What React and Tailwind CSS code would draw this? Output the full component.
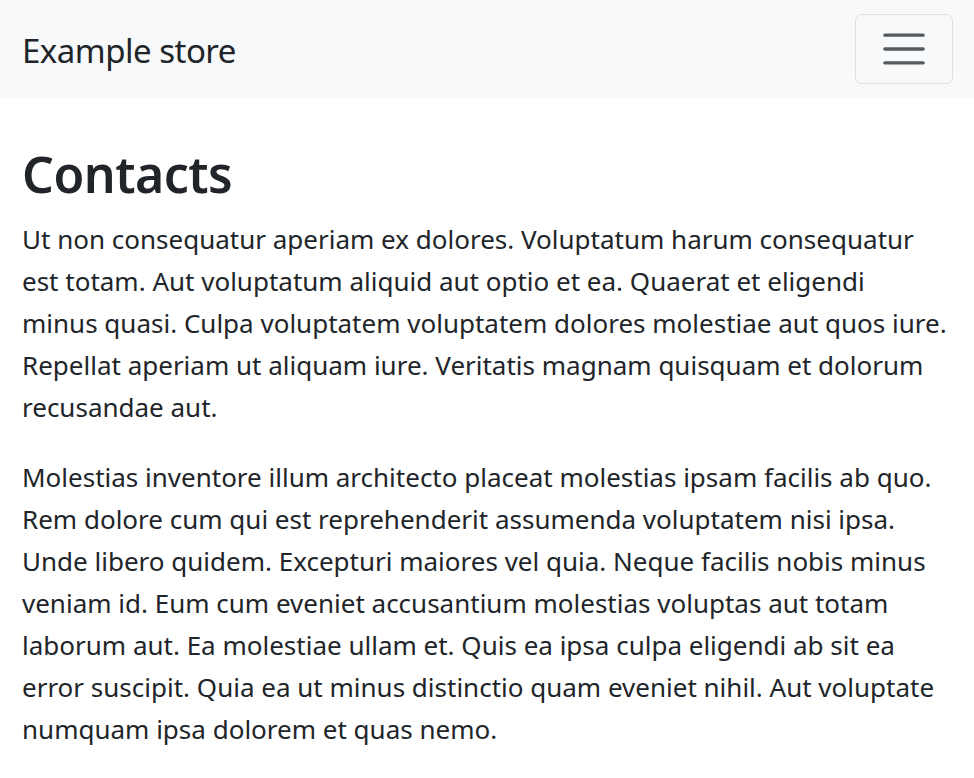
import React from 'react';

const para1 = [
    'Ut non consequatur aperiam ex dolores. Voluptatum harum consequatur',
    'est totam. Aut voluptatum aliquid aut optio et ea. Quaerat et eligendi',
    'minus quasi. Culpa voluptatem voluptatem dolores molestiae aut quos iure.',
    'Repellat aperiam ut aliquam iure. Veritatis magnam quisquam et dolorum',
    'recusandae aut.',
];

const para2 = [
    'Molestias inventore illum architecto placeat molestias ipsam facilis ab quo.',
    'Rem dolore cum qui est reprehenderit assumenda voluptatem nisi ipsa.',
    'Unde libero quidem. Excepturi maiores vel quia. Neque facilis nobis minus',
    'veniam id. Eum cum eveniet accusantium molestias voluptas aut totam',
    'laborum aut. Ea molestiae ullam et. Quis ea ipsa culpa eligendi ab sit ea',
    'error suscipit. Quia ea ut minus distinctio quam eveniet nihil. Aut voluptate',
    'numquam ipsa dolorem et quas nemo.',
];

const Lines = ({ lines }) => (
    <p className="mb-[28px] whitespace-nowrap">
        {lines.map((line, i) => (
            <React.Fragment key={i}>
                {line}
                {i < lines.length - 1 && <br />}
            </React.Fragment>
        ))}
    </p>
);

const App = () => {
    return (
        <div className="min-h-screen bg-white text-[#212529] font-['Noto_Sans',sans-serif]">
            {/* Navbar */}
            <nav className="h-[98px] bg-[#f8f9fa] flex items-center justify-between px-[22px]">
                <a href="#" className="text-[33px] leading-none text-[#212529] tracking-[-0.5px] mt-[2px]">Example store</a>
                <button className="w-[98px] h-[70px] mr-[-1px] border border-[rgba(0,0,0,0.1)] rounded-[7px] flex items-center justify-center">
                    <svg width="52" height="52" viewBox="0 0 30 30" className="block">
                        <path stroke="rgba(33,37,41,0.75)" strokeLinecap="round" strokeMiterlimit="10" strokeWidth="2" d="M4 7h22M4 15h22M4 23h22" />
                    </svg>
                </button>
            </nav>

            {/* Content */}
            <main className="px-[22px] pt-[46px]">
                <h1 className="text-[50px] font-semibold leading-[60px] mb-[14px] tracking-[-0.5px]">Contacts</h1>
                <div className="text-[26px] leading-[42px]">
                    <Lines lines={para1} />
                    <Lines lines={para2} />
                </div>
            </main>
        </div>
    );
};

export default App;
